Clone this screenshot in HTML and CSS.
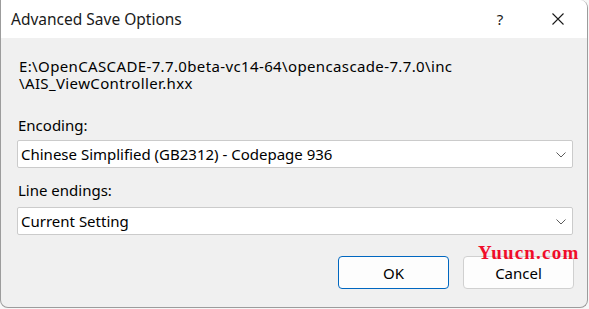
FILE: index.html
```html
<!DOCTYPE html>
<html lang="en">
<head>
    <meta charset="UTF-8">
    <meta name="viewport" content="width=device-width, initial-scale=1.0">
    <title>Advanced Save Options</title>
    <link rel="stylesheet" href="styles.css">
</head>
<body>
    <div class="dialog">
        <div class="titlebar">
            <span class="title">Advanced Save Options</span>
            <div class="caption-btns">
                <span class="cap-btn help">?</span>
                <span class="cap-btn close">
                    <svg width="12" height="12" viewBox="0 0 12 12">
                        <path d="M0.5 0.5 L11.5 11.5 M11.5 0.5 L0.5 11.5" stroke="#1a1a1a" stroke-width="1.1" fill="none"/>
                    </svg>
                </span>
            </div>
        </div>

        <div class="content">
            <div class="path">
                <div class="path-line">E:\OpenCASCADE-7.7.0beta-vc14-64\opencascade-7.7.0\inc</div>
                <div class="path-line">\AIS_ViewController.hxx</div>
            </div>

            <div class="label first">Encoding:</div>
            <div class="combo">
                <span>Chinese Simplified (GB2312) - Codepage 936</span>
                <svg class="chev" width="10" height="6" viewBox="0 0 10 6">
                    <path d="M0.5 0.5 L5 5 L9.5 0.5" stroke="#5c5c5c" stroke-width="1" fill="none"/>
                </svg>
            </div>

            <div class="label second">Line endings:</div>
            <div class="combo">
                <span>Current Setting</span>
                <svg class="chev" width="10" height="6" viewBox="0 0 10 6">
                    <path d="M0.5 0.5 L5 5 L9.5 0.5" stroke="#5c5c5c" stroke-width="1" fill="none"/>
                </svg>
            </div>

            <div class="actions">
                <button class="btn default">OK</button>
                <button class="btn">Cancel</button>
            </div>
        </div>

        <!-- marca de agua de la captura -->
        <div class="watermark">Yuucn.com</div>
    </div>
</body>
</html>
```

FILE: styles.css
```css
body {
    margin: 0;
    background-color: #f7f7f7;
    font-family: "Noto Sans", "Open Sans", sans-serif;
    color: #000;
}

.dialog {
    position: relative;
    width: 586px;
    height: 307px;
    background-color: #f0f0f0;
    border: 1px solid #9c9c9c;
    border-top: none;
    border-radius: 0 8px 8px 8px;
    overflow: hidden;
}

.titlebar {
    height: 38px;
    background-color: #fff;
    display: flex;
    align-items: center;
    justify-content: space-between;
    padding-left: 10px;
}

.title {
    font-size: 15.5px;
    color: #1a1a1a;
    margin-top: -1px;
}

.caption-btns {
    display: flex;
    align-items: center;
    height: 100%;
}

.cap-btn {
    display: flex;
    align-items: center;
    justify-content: center;
    width: 58px;
    height: 100%;
}

.help {
    font-size: 15px;
    color: #1a1a1a;
    margin-top: -1px;
}

.close {
    margin-top: -1px;
}

.content {
    padding: 20px 14px 0 16px;
}

.path {
    font-size: 15px;
    letter-spacing: 0.37px;
    margin-left: 2px;
}

.path-line {
    height: 17px;
    line-height: 17px;
}

.label {
    font-size: 15px;
    height: 17px;
    line-height: 17px;
    margin: 14px 0 6px 1px;
}

.label.first {
    margin-top: 25px;
}

.label.second {
    margin-bottom: 8px;
}

.combo {
    height: 26px;
    background-color: #fff;
    border: 1px solid #cbcbcb;
    border-radius: 2px;
    display: flex;
    align-items: center;
    justify-content: space-between;
    padding: 0 6px 0 3px;
    font-size: 15px;
}

.chev {
    margin-top: 1px;
}

.actions {
    display: flex;
    justify-content: flex-end;
    gap: 14px;
    margin-top: 21px;
    margin-right: -1px;
}

.btn {
    width: 111px;
    height: 33px;
    background-color: #fdfdfd;
    border: 1px solid #d0d0d0;
    border-radius: 4px;
    font-family: "Noto Sans", "Open Sans", sans-serif;
    font-size: 15px;
    color: #000;
    padding: 0;
}

.btn.default {
    border-color: #0067c0;
}

.watermark {
    position: absolute;
    left: 477px;
    top: 245px;
    font-family: "Liberation Serif", serif;
    font-weight: bold;
    font-size: 19px;
    line-height: 15px;
    letter-spacing: 1.2px;
    color: #f00d2a;
}
```
